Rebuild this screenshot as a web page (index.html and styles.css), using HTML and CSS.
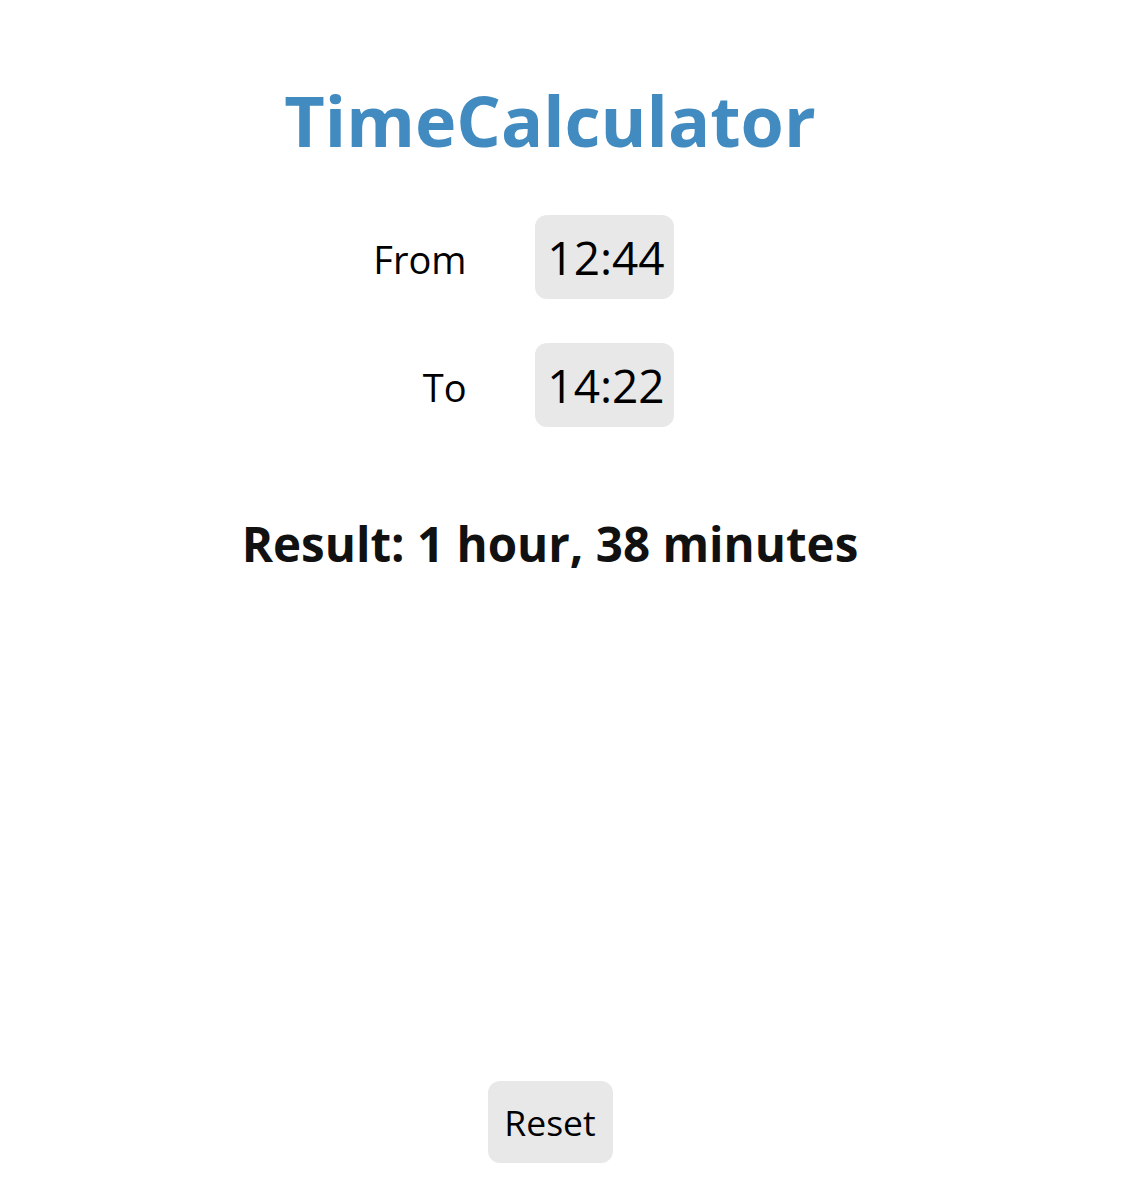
FILE: index.html
```html
<!DOCTYPE html>
<html>
<head>
<meta charset="utf-8">
<link rel="stylesheet" href="styles.css">
</head>
<body>
<div class="app">
  <h1 class="title">TimeCalculator</h1>
  <div class="form">
    <div class="row">
      <span class="label">From</span>
      <div class="time">12:44</div>
    </div>
    <div class="row">
      <span class="label">To</span>
      <div class="time">14:22</div>
    </div>
  </div>
  <div class="result">Result: 1 hour, 38 minutes</div>
  <button class="reset">Reset</button>
</div>
</body>
</html>
```
FILE: styles.css
```css
html, body {
  margin: 0;
  padding: 0;
  background: #ffffff;
}
body {
  font-family: "Open Sans", "Noto Sans", sans-serif;
  color: #111111;
}
.app {
  height: 1190px;
  box-sizing: border-box;
  display: flex;
  flex-direction: column;
  align-items: center;
  padding-right: 32px;
  padding-bottom: 27px;
}
.title {
  margin: 70px 0 0 0;
  font-size: 70px;
  font-weight: 700;
  line-height: 100px;
  color: #428bc1;
}
.form {
  align-self: stretch;
  display: flex;
  flex-direction: column;
  gap: 44px;
  padding-right: 60px;
  margin-top: 45px;
}
.row {
  display: flex;
  justify-content: center;
  align-items: center;
  gap: 69px;
}
.label {
  width: 100px;
  text-align: right;
  font-size: 38px;
  color: #000000;
  padding-top: 4px;
  margin-right: -1px;
}
.time {
  width: 139px;
  height: 84px;
  box-sizing: border-box;
  background: #e8e8e8;
  border-radius: 12px;
  display: flex;
  align-items: center;
  justify-content: center;
  padding-left: 4px;
  font-size: 46px;
  color: #000000;
}
.result {
  margin-top: 84px;
  font-size: 47.5px;
  font-weight: 700;
  color: #111111;
}
.reset {
  margin-top: auto;
  width: 125px;
  height: 82px;
  border: none;
  border-radius: 12px;
  background: #e8e8e8;
  font-family: "Open Sans", "Noto Sans", sans-serif;
  font-size: 35.5px;
  color: #000000;
  padding: 0;
}
```
